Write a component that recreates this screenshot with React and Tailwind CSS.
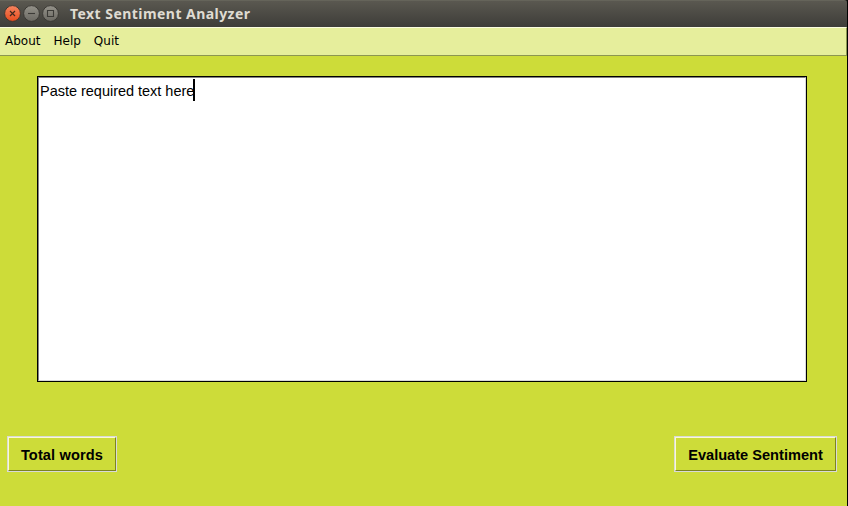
const menuItems = ['About', 'Help', 'Quit'];

function WindowControl({ kind }) {
  const close = kind === 'close';
  return (
    <svg width="17" height="17" viewBox="0 0 17 17" fill="none" className="block">
      <defs>
        <linearGradient id={`fill-${kind}`} x1="0" y1="0" x2="0" y2="1">
          <stop offset="0" stopColor={close ? '#f68560' : '#94928a'} />
          <stop offset="1" stopColor={close ? '#e64c1d' : '#6b6962'} />
        </linearGradient>
      </defs>
      <circle cx="8.5" cy="8.5" r="7.9" fill={`url(#fill-${kind})`} stroke="#383631" strokeWidth="0.9" />
      {close && <path d="M6 6l5 5M11 6l-5 5" stroke="#42281d" strokeWidth="1.2" />}
      {kind === 'minimize' && <path d="M5 8.5h7" stroke="#3c3b37" strokeWidth="1.1" />}
      {kind === 'maximize' && <path d="M5.5 5.5h6v6h-6z" stroke="#3c3b37" strokeWidth="1.1" />}
    </svg>
  );
}

function ToolButton({ className, children }) {
  return (
    <button className={`h-9 border border-[#d9d9d9] ${className}`}>
      <span className="flex h-full items-center justify-center border border-t-[#fbfbcf] border-l-[#fbfbcf] border-r-[#7b8421] border-b-[#7b8421] pt-[2px] font-['Liberation_Sans',sans-serif] text-[14.6px] leading-[15px] font-bold whitespace-nowrap text-black">
        {children}
      </span>
    </button>
  );
}

export default function App() {
  return (
    <div className="flex h-[506px] w-[848px] flex-col overflow-hidden border-r border-black bg-[#cddc39]">
      <div className="shrink-0 bg-[#1c1b19]">
        <header className="flex h-[27px] items-center rounded-tr-[3px] border-t border-[#65645a] bg-linear-to-b from-[#5a5850] to-[#3e3d39] pb-px pl-1">
          <div className="flex gap-[2px]">
            <WindowControl kind="close" />
            <WindowControl kind="minimize" />
            <WindowControl kind="maximize" />
          </div>
          <h1 className="ml-[11px] font-['Noto_Sans',sans-serif] text-[14px] leading-none font-bold tracking-[0.45px] whitespace-nowrap text-[#dfdbd2]">
            Text Sentiment Analyzer
          </h1>
        </header>
      </div>
      <nav className="flex h-[29px] shrink-0 items-center gap-[13px] border-t border-r border-b border-t-[#fafce0] border-r-[#8c9650] border-b-[#8c9650] bg-[#e6ee9c] pb-px pl-[5px] font-['DejaVu_Sans',sans-serif] text-[12px] leading-none text-black">
        {menuItems.map((item) => (
          <span key={item}>{item}</span>
        ))}
      </nav>
      <main className="flex flex-1 flex-col pt-5">
        <div className="ml-[37px] h-[306px] w-[770px] border border-black">
          <div className="flex h-full items-start border border-t-[#828282] border-l-[#828282] border-r-[#d9d9d9] border-b-[#d9d9d9] bg-white pt-px pl-px font-['Liberation_Sans',sans-serif] text-[14.5px] leading-[25px] text-black">
            <span className="w-[153px] tracking-[-0.02px] whitespace-nowrap">Paste required text here</span>
            <span className="h-[22px] w-[2px] bg-black" />
          </div>
        </div>
        <div className="mt-[54px] flex justify-between pr-[10px] pl-[7px]">
          <ToolButton className="w-[110px] tracking-[0.13px]">Total words</ToolButton>
          <ToolButton className="w-[163px]">Evaluate Sentiment</ToolButton>
        </div>
      </main>
    </div>
  );
}
